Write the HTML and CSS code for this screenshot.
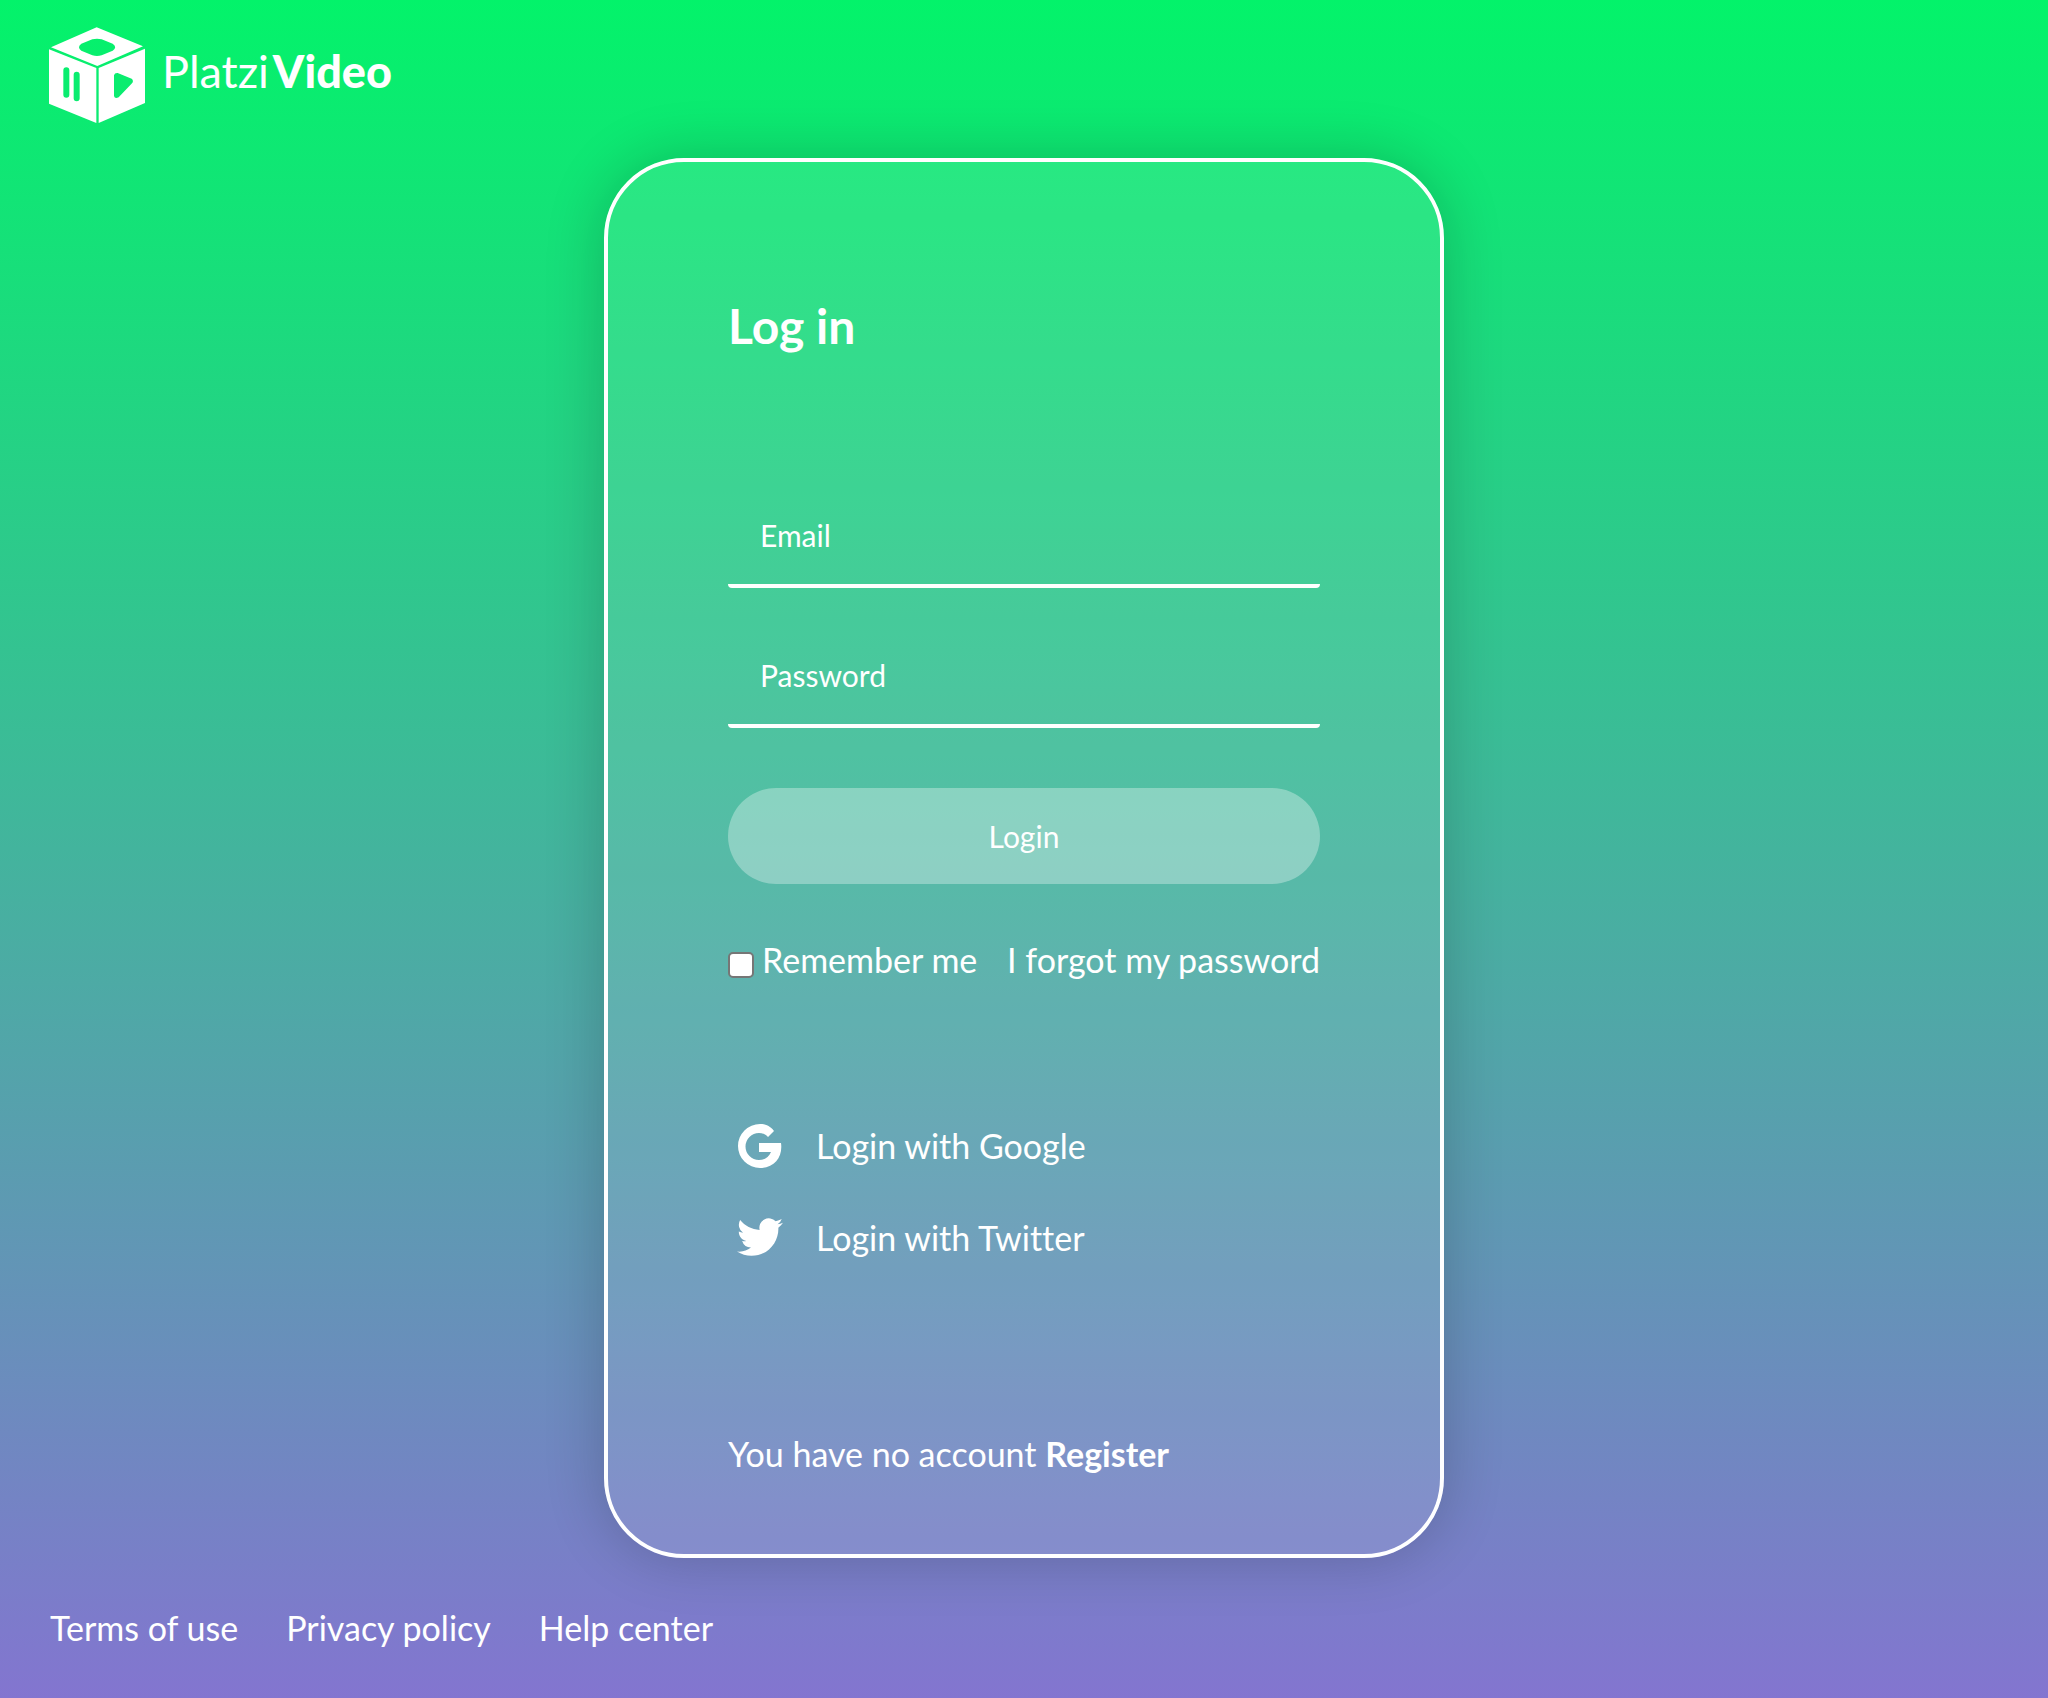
FILE: index.html
```html
<!DOCTYPE html>
<html lang="en">
<head>
  <meta charset="utf-8">
  <meta name="viewport" content="width=device-width, initial-scale=1">
  <title>PlatziVideo - Log in</title>
  <link rel="stylesheet" href="styles.css">
</head>
<body>
  <header class="header">
    <a class="brand" href="#">
      <svg class="brand-cube" viewBox="54 48 294 294" fill="currentColor" fill-rule="evenodd" aria-hidden="true">
        <path d="M200 52 339 109 202 168 63 112ZM187 88 154 101Q140 111 154 122L187 136Q201 140 215 136L248 122Q263 111 248 101L215 88Q201 84 187 88Z"/>
        <path d="M57 118 199 174V339L57 281ZM100 181V254A9 9 0 0 0 118 254V181A9 9 0 0 0 100 181ZM131 194V265A9 9 0 0 0 149 265V194A9 9 0 0 0 131 194Z"/>
        <path d="M206 174 345 116V279L206 339ZM252 196V258Q254 267 266 262L306 220Q312 212 305 206L263 189Q254 188 252 196Z"/>
      </svg>
      <span class="brand-name">Platzi<strong>Video</strong></span>
    </a>
  </header>

  <main class="login">
    <section class="card">
      <h1 class="card-title">Log in</h1>
      <form class="form">
        <input class="field" type="email" placeholder="Email" aria-label="Email">
        <input class="field" type="password" placeholder="Password" aria-label="Password">
        <button class="submit" type="button">Login</button>
        <div class="options">
          <label class="remember"><input class="tick" type="checkbox">Remember me</label>
          <a href="#">I forgot my password</a>
        </div>
      </form>
      <div class="social">
        <a class="social-link" href="#">
          <svg class="social-icon" viewBox="0 0 64 64" aria-hidden="true">
            <path fill="currentColor" d="M46 17 40 23C37 20 34 19 31 19A13 13 0 1 0 31 46C37 46 41 43 43 38H31V29H53C55 42 47 54 32 54A22 22 0 1 1 32 10C38 10 42 12 46 17Z"/>
          </svg>
          Login with Google
        </a>
        <a class="social-link" href="#">
          <svg class="social-icon" viewBox="0 0 64 64" aria-hidden="true">
            <path fill="currentColor" transform="translate(9 8) scale(1.92)" d="M23.95 4.57a10 10 0 0 1-2.82.77 4.96 4.96 0 0 0 2.16-2.72c-.95.55-2 .95-3.13 1.18a4.92 4.92 0 0 0-8.38 4.48C7.69 8.1 4.07 6.13 1.64 3.16a4.92 4.92 0 0 0 1.52 6.57 4.9 4.9 0 0 1-2.23-.61v.06c0 2.38 1.7 4.37 3.95 4.82a5 5 0 0 1-2.21.09 4.94 4.94 0 0 0 4.6 3.42A9.87 9.87 0 0 1 0 19.54a13.99 13.99 0 0 0 7.55 2.21c9.05 0 14-7.5 14-13.98 0-.21 0-.42-.02-.63a9.94 9.94 0 0 0 2.42-2.57Z"/>
          </svg>
          Login with Twitter
        </a>
      </div>
      <p class="register">You have no account <a href="#">Register</a></p>
    </section>
  </main>

  <footer class="footer">
    <a href="#">Terms of use</a>
    <a href="#">Privacy policy</a>
    <a href="#">Help center</a>
  </footer>
</body>
</html>
```
FILE: styles.css
```css
* {
  box-sizing: border-box;
}

body {
  margin: 0;
  min-height: 100vh;
  display: flex;
  flex-direction: column;
  background: linear-gradient(#03f36a, #8375d0);
  color: #fff;
  font: 34px/40px Lato, sans-serif;
  font-variant-ligatures: none;
}

a {
  color: inherit;
  text-decoration: none;
}

.header {
  padding: 26px 48px 34px;
}

.brand {
  display: inline-flex;
  align-items: center;
  gap: 16px;
  vertical-align: top;
}

.brand-cube {
  width: 98px;
  height: 98px;
}

.brand-name {
  padding-bottom: 8px;
  font-size: 45px;
}

.brand-name strong {
  margin-left: 4px;
  font-weight: 900;
}

.login {
  flex: 1;
  display: flex;
  justify-content: center;
}

.card {
  width: 100%;
  max-width: 840px;
  padding: 136px 120px 80px;
  border: 4px solid #fff;
  border-radius: 80px;
  background: rgba(255, 255, 255, 0.1);
  box-shadow: 0 0 60px rgba(0, 0, 0, 0.2);
}

.card-title {
  margin: 0 0 130px;
  font-size: 48px;
  line-height: 56px;
}

.form {
  display: flex;
  flex-direction: column;
}

.field {
  height: 104px;
  margin: 0 0 36px;
  padding: 2px 32px 0;
  border: 0;
  border-bottom: 4px solid #fff;
  border-radius: 4px;
  background: transparent;
  color: inherit;
  font: inherit;
  font-size: 30px;
}

.field::placeholder {
  color: #fff;
  opacity: 1;
}

.submit {
  height: 96px;
  margin: 24px 0 56px;
  border: 0;
  border-radius: 50px;
  background: rgba(255, 255, 255, 0.32);
  color: inherit;
  font: inherit;
  font-size: 30px;
}

.options {
  display: flex;
  justify-content: space-between;
}

.remember {
  display: flex;
  align-items: center;
  gap: 8px;
}

.tick {
  appearance: none;
  width: 26px;
  height: 26px;
  margin: 10px 0 0;
  border: 2px solid #767676;
  border-radius: 5px;
  background: #fff;
}

.tick:checked {
  background: #0075ff;
}

.social {
  display: flex;
  flex-direction: column;
  gap: 28px;
  margin: 134px 0 164px;
}

.social-link {
  display: flex;
  align-items: center;
  gap: 24px;
}

.social-icon {
  width: 64px;
  height: 64px;
}

.register {
  margin: 0;
}

.register a {
  font-weight: 700;
}

.footer {
  display: flex;
  gap: 48px;
  padding: 50px 50px 50px;
}
```
